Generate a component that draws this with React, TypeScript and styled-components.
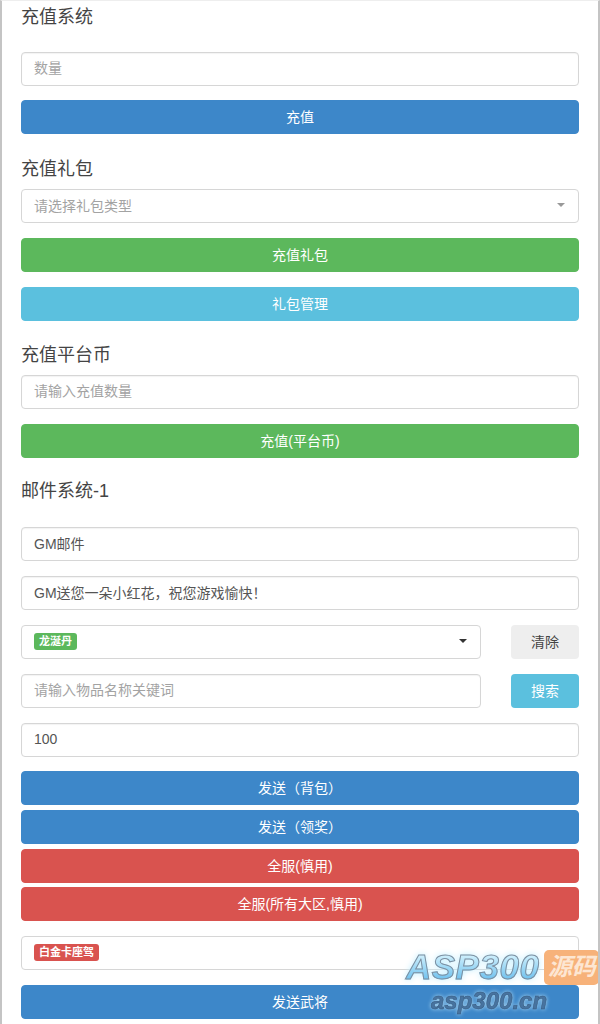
import React from 'react';
import styled, { createGlobalStyle } from 'styled-components';

const GlobalStyle = createGlobalStyle`
  html, body {
    margin: 0;
    padding: 0;
    background: #fff;
  }
  body {
    font-family: "Liberation Sans", "Noto Sans CJK SC", sans-serif;
    font-size: 14px;
    color: #555;
  }
  * {
    box-sizing: border-box;
  }
`;

const Page = styled.div`
  position: relative;
  width: 600px;
  height: 1024px;
  overflow: hidden;
  padding: 6px 19px 0;
  border-left: 2px solid #c4c4c4;
  border-right: 2px solid #c4c4c4;
  border-top: 1px solid #eee;
  background: #fff;
  display: flex;
  flex-direction: column;
`;

type Spaced = { $mt?: number };

const Heading = styled.h3<Spaced>`
  margin: ${(p) => p.$mt ?? 0}px 0 0;
  height: 20px;
  line-height: 20px;
  font-size: 18px;
  font-weight: 400;
  color: #444;
`;

const Input = styled.input<Spaced>`
  display: block;
  flex: none;
  width: 100%;
  height: 34px;
  margin-top: ${(p) => p.$mt ?? 15}px;
  padding: 0 12px 2px;
  font: inherit;
  color: #555;
  background: #fff;
  border: 1px solid #d6d6d6;
  border-radius: 4px;
  box-shadow: inset 0 1px 1px rgba(0, 0, 0, 0.05);
  &::placeholder {
    color: #a3a3a3;
    opacity: 1;
  }
`;

const SelectBox = styled.div<Spaced & { $fixed?: boolean }>`
  display: flex;
  flex: ${(p) => (p.$fixed ? 'none' : 1)};
  align-items: center;
  justify-content: space-between;
  height: 34px;
  margin-top: ${(p) => p.$mt ?? 0}px;
  padding: 0 12px 2px;
  border: 1px solid #d6d6d6;
  border-radius: 4px;
  background: #fff;
`;

const SelectHint = styled.span`
  color: #a3a3a3;
`;

const Caret = styled.span<{ $dark?: boolean }>`
  width: 0;
  height: 0;
  margin-right: 1px;
  border-left: 4px solid transparent;
  border-right: 4px solid transparent;
  border-top: 4px solid ${(p) => (p.$dark ? '#333' : '#999')};
`;

const Tag = styled.span<{ $color: string }>`
  display: inline-block;
  height: 17px;
  line-height: 17px;
  padding: 0 5px;
  font-size: 11px;
  font-weight: 700;
  color: #fff;
  border-radius: 3px;
  background: ${(p) => p.$color};
`;

const colors = {
  blue: '#3d87c9',
  green: '#5cb85c',
  cyan: '#5bc0de',
  red: '#d9534f',
};

const Button = styled.button<Spaced & { $color: keyof typeof colors }>`
  display: block;
  flex: none;
  width: 100%;
  height: 34px;
  margin-top: ${(p) => p.$mt ?? 15}px;
  padding: 0 0 2px;
  font: inherit;
  color: #fff;
  border: 1px solid ${(p) => colors[p.$color]};
  border-radius: 4px;
  background: ${(p) => colors[p.$color]};
`;

const Row = styled.div`
  display: flex;
  flex: none;
  align-items: center;
  gap: 30px;
  margin-top: 15px;
  ${Input} {
    flex: 1;
    width: auto;
    margin-top: 0;
  }
`;

const SideButton = styled.button<{ $info?: boolean }>`
  flex: none;
  width: 68px;
  height: 34px;
  padding: 0 0 2px;
  font: inherit;
  border: none;
  border-radius: 4px;
  color: ${(p) => (p.$info ? '#fff' : '#444')};
  background: ${(p) => (p.$info ? colors.cyan : '#eee')};
`;

const Watermark = styled.div`
  position: absolute;
  left: 404px;
  top: 947px;
  width: 194px;
  height: 76px;
  pointer-events: none;
`;

const WatermarkTop = styled.div`
  display: flex;
  align-items: center;
  gap: 5px;
`;

const BrandName = styled.span`
  font-size: 35px;
  line-height: 38px;
  font-weight: 700;
  font-style: italic;
  letter-spacing: 0.5px;
  color: transparent;
  background: linear-gradient(180deg, #d4f2fd 15%, #6cc0ee 85%);
  -webkit-background-clip: text;
  background-clip: text;
  -webkit-text-stroke: 1px #7d8fa0;
  filter: drop-shadow(0 0 3px #c4efff);
`;

const BrandBadge = styled.span`
  flex: none;
  width: 55px;
  height: 35px;
  line-height: 34px;
  text-align: center;
  font-size: 24px;
  font-weight: 700;
  font-style: italic;
  color: #fde6d2;
  border-radius: 5px;
  background: #f7b27a;
`;

const BrandUrl = styled.div`
  margin: 1px 0 0 25px;
  font-size: 24px;
  line-height: 28px;
  font-weight: 700;
  font-style: italic;
  color: #47739f;
  -webkit-text-stroke: 0.5px #36577c;
  filter: drop-shadow(0 0 2px #b5def5);
`;

function App() {
  return (
    <>
      <GlobalStyle />
      <Page>
        <Heading>充值系统</Heading>
        <Input $mt={25} placeholder='数量' />
        <Button $mt={14} $color='blue'>充值</Button>

        <Heading $mt={25}>充值礼包</Heading>
        <SelectBox $fixed $mt={10}>
          <SelectHint>请选择礼包类型</SelectHint>
          <Caret />
        </SelectBox>
        <Button $color='green'>充值礼包</Button>
        <Button $color='cyan'>礼包管理</Button>

        <Heading $mt={24}>充值平台币</Heading>
        <Input $mt={10} placeholder='请输入充值数量' />
        <Button $color='green'>充值(平台币)</Button>

        <Heading $mt={23}>邮件系统-1</Heading>
        <Input $mt={26} defaultValue='GM邮件' />
        <Input defaultValue='GM送您一朵小红花，祝您游戏愉快！' />
        <Row>
          <SelectBox>
            <Tag $color={colors.green}>龙涎丹</Tag>
            <Caret $dark />
          </SelectBox>
          <SideButton>清除</SideButton>
        </Row>
        <Row>
          <Input placeholder='请输入物品名称关键词' />
          <SideButton $info>搜索</SideButton>
        </Row>
        <Input defaultValue='100' />
        <Button $mt={14} $color='blue'>发送（背包）</Button>
        <Button $mt={5} $color='blue'>发送（领奖）</Button>
        <Button $mt={5} $color='red'>全服(慎用)</Button>
        <Button $mt={4} $color='red'>全服(所有大区,慎用)</Button>
        <Row>
          <SelectBox>
            <Tag $color={colors.red}>白金卡座驾</Tag>
            <Caret $dark />
          </SelectBox>
        </Row>
        <Button $color='blue'>发送武将</Button>

        <Watermark>
          <WatermarkTop>
            <BrandName>ASP300</BrandName>
            <BrandBadge>源码</BrandBadge>
          </WatermarkTop>
          <BrandUrl>asp300.cn</BrandUrl>
        </Watermark>
      </Page>
    </>
  );
}

export default App;
